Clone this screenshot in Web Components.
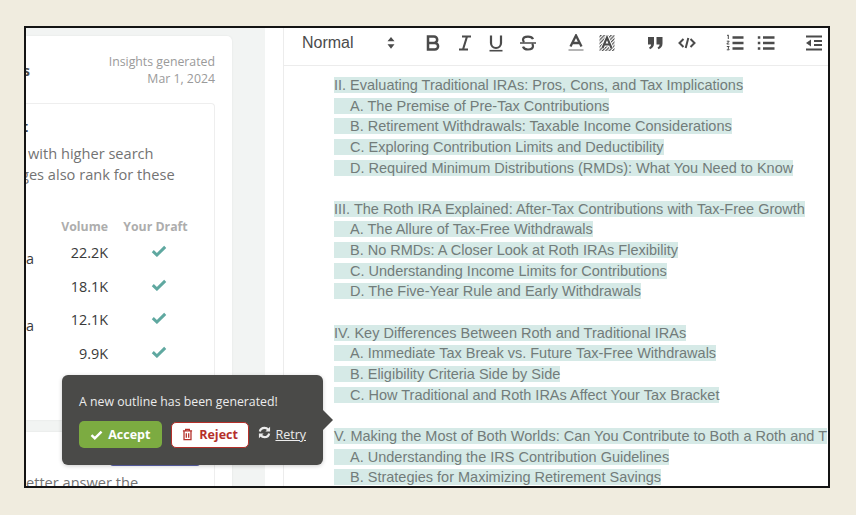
<!DOCTYPE html>
<html>
<head>
<meta charset="utf-8">
<style>
    html, body { margin: 0; height: 100%; background: #f0ecdf; overflow: hidden; }
    body { padding: 26px 0 0 24px; box-sizing: border-box; }
</style>
</head>
<body>
<review-frame>
    <insights-panel slot="left">
        <insights-card>
            <span slot="title">s</span>
            <span slot="date">Insights generated<br>Mar 1, 2024</span>
            <keyword-box>
                <span slot="heading">t</span>
                <span slot="first">with higher search</span>
                <span slot="second">ges also rank for these</span>
                <keyword-row head vol="Volume"></keyword-row>
                <keyword-row name="a" vol="22.2K"></keyword-row>
                <keyword-row vol="18.1K"></keyword-row>
                <keyword-row name="a" vol="12.1K"></keyword-row>
                <keyword-row vol="9.9K"></keyword-row>
            </keyword-box>
        </insights-card>
        <answer-card>etter answer the</answer-card>
    </insights-panel>
    <outline-editor slot="right">
        <outline-line>II. Evaluating Traditional IRAs: Pros, Cons, and Tax Implications</outline-line>
        <outline-line sub>A. The Premise of Pre-Tax Contributions</outline-line>
        <outline-line sub>B. Retirement Withdrawals: Taxable Income Considerations</outline-line>
        <outline-line sub>C. Exploring Contribution Limits and Deductibility</outline-line>
        <outline-line sub>D. Required Minimum Distributions (RMDs): What You Need to Know</outline-line>
        <outline-line blank></outline-line>
        <outline-line>III. The Roth IRA Explained: After-Tax Contributions with Tax-Free Growth</outline-line>
        <outline-line sub>A. The Allure of Tax-Free Withdrawals</outline-line>
        <outline-line sub>B. No RMDs: A Closer Look at Roth IRAs Flexibility</outline-line>
        <outline-line sub>C. Understanding Income Limits for Contributions</outline-line>
        <outline-line sub>D. The Five-Year Rule and Early Withdrawals</outline-line>
        <outline-line blank></outline-line>
        <outline-line>IV. Key Differences Between Roth and Traditional IRAs</outline-line>
        <outline-line sub>A. Immediate Tax Break vs. Future Tax-Free Withdrawals</outline-line>
        <outline-line sub>B. Eligibility Criteria Side by Side</outline-line>
        <outline-line sub>C. How Traditional and Roth IRAs Affect Your Tax Bracket</outline-line>
        <outline-line blank></outline-line>
        <outline-line>V. Making the Most of Both Worlds: Can You Contribute to Both a Roth and T</outline-line>
        <outline-line sub>A. Understanding the IRS Contribution Guidelines</outline-line>
        <outline-line sub>B. Strategies for Maximizing Retirement Savings</outline-line>
    </outline-editor>
    <outline-popup slot="popup"></outline-popup>
</review-frame>

<script>
const CHECK = `<svg viewBox="0 0 16 12" aria-hidden="true"><path d="M1.8 6.2 5.9 10 14.2 1.9" fill="none" stroke="currentColor" stroke-width="3"/></svg>`;

class ReviewFrame extends HTMLElement {
    connectedCallback() {
        this.attachShadow({ mode: 'open' }).innerHTML = `
            <style>
                :host {
                    display: flex;
                    position: relative;
                    box-sizing: border-box;
                    width: 806px;
                    height: 462px;
                    border: 2px solid #141414;
                    background: #fff;
                    overflow: hidden;
                }
                ::slotted([slot=left]) { flex: 0 0 239px; }
                ::slotted([slot=right]) { flex: 1; min-width: 0; margin-left: 18px; }
            </style>
            <slot name="left"></slot>
            <slot name="right"></slot>
            <slot name="popup"></slot>
        `;
    }
}

class InsightsPanel extends HTMLElement {
    connectedCallback() {
        this.attachShadow({ mode: 'open' }).innerHTML = `
            <style>
                :host {
                    display: flex;
                    flex-direction: column;
                    gap: 12px;
                    box-sizing: border-box;
                    height: 100%;
                    padding-top: 8px;
                    background: #f2f4f3;
                    overflow: hidden;
                    font-family: 'Open Sans', sans-serif;
                }
            </style>
            <slot></slot>
        `;
    }
}

class InsightsCard extends HTMLElement {
    connectedCallback() {
        this.attachShadow({ mode: 'open' }).innerHTML = `
            <style>
                :host {
                    display: block;
                    box-sizing: border-box;
                    flex: none;
                    width: 206px;
                    height: 384px;
                    background: #fff;
                    border-radius: 0 5px 5px 0;
                    box-shadow: 0 0 2px rgba(0, 0, 0, 0.08);
                    padding: 16px 17px 0 0;
                }
                .top {
                    display: flex;
                    justify-content: space-between;
                    height: 51px;
                }
                .title {
                    font-weight: 700;
                    font-size: 14px;
                    line-height: 19px;
                    color: #4a4a4a;
                    margin: 9px 0 0 -3px;
                }
                .date {
                    font-size: 12.3px;
                    line-height: 16.5px;
                    color: #9a9a9a;
                    text-align: right;
                    padding-top: 2px;
                }
            </style>
            <div class="top">
                <div class="title"><slot name="title"></slot></div>
                <div class="date"><slot name="date"></slot></div>
            </div>
            <slot></slot>
        `;
    }
}

class KeywordBox extends HTMLElement {
    connectedCallback() {
        this.attachShadow({ mode: 'open' }).innerHTML = `
            <style>
                :host {
                    display: block;
                    box-sizing: border-box;
                    height: 317px;
                    border: 1px solid #eeeeee;
                    border-width: 1px 1px 0 0;
                    border-radius: 0 4px 0 0;
                    padding-top: 14px;
                }
                .heading {
                    font-weight: 700;
                    font-size: 14px;
                    line-height: 18px;
                    color: #3d3d3d;
                    margin-left: -4px;
                }
                .body {
                    margin: 7px 0 32px;
                    font-size: 14.6px;
                    line-height: 21px;
                    color: #737373;
                }
                .first { padding-left: 2px; }
                .second { margin-left: -5px; }
            </style>
            <div class="heading"><slot name="heading"></slot></div>
            <div class="body">
                <div class="first"><slot name="first"></slot></div>
                <div class="second"><slot name="second"></slot></div>
            </div>
            <slot></slot>
        `;
    }
}

class KeywordRow extends HTMLElement {
    connectedCallback() {
        const isHead = this.hasAttribute('head');
        const name = this.getAttribute('name') || '';
        const vol = this.getAttribute('vol');
        this.attachShadow({ mode: 'open' }).innerHTML = `
            <style>
                :host {
                    display: grid;
                    grid-template-columns: 10px 72px 80px;
                    height: ${isHead ? 19 : 33.5}px;
                    font-size: 14.4px;
                    color: #3a3a3a;
                    align-items: center;
                }
                .name { padding-top: 12px; }
                .vol { text-align: right; }
                .draft { display: flex; justify-content: center; padding-left: 21px; color: #5fa8a0; }
                .draft svg { width: 16px; height: 12px; margin-top: -3px; }
                .h { font-size: 12.3px; font-weight: 700; color: #adadad; }
                .h.draft { padding-left: 15px; color: #adadad; white-space: nowrap; }
            </style>
            <span class="name">${name}</span>
            <span class="vol ${isHead ? 'h' : ''}">${vol}</span>
            ${isHead ? '<span class="draft h">Your Draft</span>' : `<span class="draft">${CHECK}</span>`}
        `;
    }
}

class AnswerCard extends HTMLElement {
    connectedCallback() {
        this.attachShadow({ mode: 'open' }).innerHTML = `
            <style>
                :host {
                    display: block;
                    box-sizing: border-box;
                    flex: none;
                    width: 206px;
                    height: 100px;
                    padding-right: 17px;
                    background: #fff;
                    box-shadow: 0 0 2px rgba(0, 0, 0, 0.08);
                    font-size: 14.6px;
                    line-height: 20px;
                    color: #737373;
                }
                .box { height: 100%; padding-top: 10px; box-sizing: border-box; border-right: 1px solid #eeeeee; }
                .btn {
                    width: 90px;
                    height: 24px;
                    margin: 0 0 6px 84px;
                    background: #5d64ad;
                    border-radius: 3px;
                }
            </style>
            <div class="box">
                <div class="btn"></div>
                <slot></slot>
            </div>
        `;
    }
}

class EditorIcon extends HTMLElement {
    static paths = {
        stepper: `<path d="M9 3 12.500 7.300H5.500Z M5.500 10.300h7L9 14.800Z" fill="currentColor"/>`,
        bold: `<path d="M4 2.500h6a3.200 3.200 0 0 1 0 6.400H4Z M4 8.900h6.800a3.300 3.300 0 0 1 0 6.600H4Z" fill="none" stroke="currentColor" stroke-width="2.500"/>`,
        italic: `<path d="M6 2.500h9M3 15.500h9M11 2.500 7 15.500" fill="none" stroke="currentColor" stroke-width="2.100"/>`,
        underline: `<path d="M4 1.500v7.500a5 5 0 0 0 10 0V1.500" fill="none" stroke="currentColor" stroke-width="2.200"/><path d="M2.500 16.700h13" stroke="currentColor" stroke-width="1.600"/>`,
        strike: `<path d="M14 5.200C13.300 3.400 11.300 2.600 9 2.600c-2.800 0-5 1.200-5 3.200 0 1 .5 1.800 1.300 2.300M4 12.600c.6 1.900 2.700 2.900 5 2.900 2.900 0 5-1.300 5-3.400 0-.9-.4-1.700-1-2.200" fill="none" stroke="currentColor" stroke-width="2.200"/><path d="M1 9h16" stroke="currentColor" stroke-width="1.500"/>`,
        color: `<path d="M3.500 12.500 9 1.500l5.500 11M5.500 9h7" fill="none" stroke="currentColor" stroke-width="2.300"/><path d="M1.500 16h15" stroke="#b5b5b5" stroke-width="2"/>`,
        background: `<defs><pattern id="h" width="2.400" height="2.400" patternUnits="userSpaceOnUse" patternTransform="rotate(45)"><rect width="1.200" height="2.400" fill="#555"/></pattern></defs><rect x="1.500" y="1" width="15" height="16" fill="url(#h)"/><path d="M4.500 14 9 3.500 13.500 14M6.500 10.500h5" fill="none" stroke="#fff" stroke-width="4"/><path d="M4.500 14 9 3.500 13.500 14M6.500 10.500h5" fill="none" stroke="currentColor" stroke-width="2.100"/>`,
        quote: `<path d="M2 3h6v6.500c0 3-1.500 4.700-4 5.700l-1-1.700c1.300-.7 2-1.500 2.100-3H2Z M10.500 3h6v6.500c0 3-1.500 4.700-4 5.700l-1-1.700c1.300-.7 2-1.500 2.100-3h-3.100Z" fill="currentColor"/>`,
        code: `<path d="M5.500 5 1.500 9l4 4M12.500 5l4 4-4 4M10.300 4 7.700 14" fill="none" stroke="currentColor" stroke-width="2"/>`,
        ordered: `<path d="M6.500 3.500h11M6.500 9h11M6.500 14.500h11" stroke="currentColor" stroke-width="2.400"/><path d="M1 1.500 2.300 1v4M.8 7.200h2.400L.8 10h2.500M.8 12.500h2.400L2 14l1.200 1.800H.8" fill="none" stroke="currentColor" stroke-width="1"/>`,
        bullet: `<path d="M6 3.500h11.500M6 9h11.500M6 14.500h11.500" stroke="currentColor" stroke-width="2.400"/><path d="M.8 3.500h2.500M.8 9h2.500M.8 14.500h2.500" stroke="currentColor" stroke-width="2.400"/>`,
        outdent: `<path d="M1 2.500h16M9 7h8M9 11h8M1 15.500h16" stroke="currentColor" stroke-width="2.200"/><path d="M1 9 6 5.500v7Z" fill="currentColor"/>`
    };

    connectedCallback() {
        const name = this.getAttribute('name');
        this.attachShadow({ mode: 'open' }).innerHTML = `
            <style>
                :host { display: block; width: 18px; height: 18px; color: #4b4b4b; flex: none; }
                svg { display: block; width: 100%; height: 100%; }
            </style>
            <svg viewBox="0 0 18 18" aria-hidden="true">${EditorIcon.paths[name]}</svg>
        `;
    }
}

class EditorToolbar extends HTMLElement {
    connectedCallback() {
        this.attachShadow({ mode: 'open' }).innerHTML = `
            <style>
                :host {
                    display: flex;
                    align-items: center;
                    box-sizing: border-box;
                    flex: none;
                    height: 38px;
                    padding: 0 0 8px 18px;
                    border-bottom: 1px solid #ececec;
                    font-family: 'Liberation Sans', Arial, sans-serif;
                    font-size: 16px;
                    color: #4b4b4b;
                }
                .picker { display: flex; justify-content: space-between; align-items: center; width: 98px; margin-right: 24px; }
                .group { display: flex; gap: 13.5px; margin-right: 30px; }
            </style>
            <div class="picker"><span>Normal</span><editor-icon name="stepper"></editor-icon></div>
            <div class="group">
                <editor-icon name="bold"></editor-icon>
                <editor-icon name="italic"></editor-icon>
                <editor-icon name="underline"></editor-icon>
                <editor-icon name="strike"></editor-icon>
            </div>
            <div class="group">
                <editor-icon name="color"></editor-icon>
                <editor-icon name="background"></editor-icon>
            </div>
            <div class="group">
                <editor-icon name="quote"></editor-icon>
                <editor-icon name="code"></editor-icon>
            </div>
            <div class="group">
                <editor-icon name="ordered"></editor-icon>
                <editor-icon name="bullet"></editor-icon>
            </div>
            <editor-icon name="outdent"></editor-icon>
        `;
    }
}

class OutlineEditor extends HTMLElement {
    connectedCallback() {
        this.attachShadow({ mode: 'open' }).innerHTML = `
            <style>
                :host {
                    display: flex;
                    flex-direction: column;
                    height: 100%;
                    border-left: 1px solid #ececec;
                    overflow: hidden;
                }
                .body {
                    padding: 9px 0 0 50px;
                    font-family: 'Liberation Sans', Arial, sans-serif;
                    font-size: 14.5px;
                    line-height: 20.65px;
                    color: #727c7a;
                }
            </style>
            <editor-toolbar></editor-toolbar>
            <div class="body"><slot></slot></div>
        `;
    }
}

class OutlineLine extends HTMLElement {
    connectedCallback() {
        const sub = this.hasAttribute('sub');
        const blank = this.hasAttribute('blank');
        this.attachShadow({ mode: 'open' }).innerHTML = `
            <style>
                :host { display: block; height: 20.65px; white-space: nowrap; }
                span { background: #d6eae7; padding-left: ${sub ? 16 : 0}px; }
            </style>
            ${blank ? '' : '<span><slot></slot></span>'}
        `;
    }
}

class OutlinePopup extends HTMLElement {
    connectedCallback() {
        this.attachShadow({ mode: 'open' }).innerHTML = `
            <style>
                :host {
                    position: absolute;
                    left: 36px;
                    top: 347px;
                    box-sizing: border-box;
                    width: 261px;
                    height: 90px;
                    padding: 18px 17px 0;
                    background: #4a4a48;
                    border-radius: 6px;
                    box-shadow: 0 1px 4px rgba(0, 0, 0, 0.2);
                    font-family: 'Open Sans', sans-serif;
                    color: #ececec;
                }
                :host::after {
                    content: '';
                    position: absolute;
                    left: 100%;
                    top: 35px;
                    border: 10px solid transparent;
                    border-left-color: #4a4a48;
                    border-right-width: 0;
                }
                p { margin: 0 0 10px; font-size: 12.3px; line-height: 18px; }
                .actions { display: flex; align-items: center; }
                button {
                    display: flex;
                    align-items: center;
                    justify-content: center;
                    box-sizing: border-box;
                    height: 27px;
                    border-radius: 5px;
                    font: 700 12.5px 'Open Sans', sans-serif;
                    padding: 0;
                }
                .accept { width: 83px; background: #7cab41; color: #fff; border: 0; gap: 5px; }
                .accept svg { width: 13px; height: 10px; }
                .reject { width: 79px; height: 26px; margin-left: 9px; background: #fff; color: #b5302a; border: 1px solid #b5302a; gap: 6px; }
                .reject svg { width: 11px; height: 13px; }
                .retry { display: flex; align-items: center; margin-left: 9px; font-size: 12.5px; gap: 4px; }
                .retry svg { width: 13px; height: 13px; margin-top: -4px; }
                .retry a { color: #ececec; text-decoration: underline; }
            </style>
            <p>A new outline has been generated!</p>
            <div class="actions">
                <button class="accept">${CHECK}Accept</button>
                <button class="reject">
                    <svg viewBox="0 0 12 14" aria-hidden="true"><path d="M1 3h10M4 3V1.300h4V3M2.200 3v9.700h7.600V3M4.700 5.500v5M7.300 5.500v5" fill="none" stroke="currentColor" stroke-width="1.400"/></svg>Reject</button>
                <span class="retry">
                    <svg viewBox="0 0 14 14" aria-hidden="true"><path d="M2 6C2.500 3.500 4.500 2 7 2c1.700 0 3 .7 4 2M12 8c-.5 2.500-2.500 4-5 4-1.700 0-3-.7-4-2" fill="none" stroke="currentColor" stroke-width="2.400"/><path d="M13 .8v5H8ZM1 13.200v-5h5Z" fill="currentColor"/></svg>
                    <a>Retry</a>
                </span>
            </div>
        `;
    }
}

customElements.define('review-frame', ReviewFrame);
customElements.define('insights-panel', InsightsPanel);
customElements.define('insights-card', InsightsCard);
customElements.define('keyword-box', KeywordBox);
customElements.define('keyword-row', KeywordRow);
customElements.define('answer-card', AnswerCard);
customElements.define('editor-icon', EditorIcon);
customElements.define('editor-toolbar', EditorToolbar);
customElements.define('outline-editor', OutlineEditor);
customElements.define('outline-line', OutlineLine);
customElements.define('outline-popup', OutlinePopup);
</script>
</body>
</html>
